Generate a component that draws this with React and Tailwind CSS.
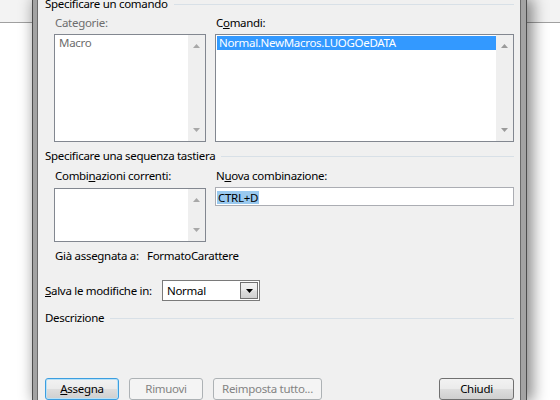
const font = "font-['Noto_Sans',sans-serif] text-[11.5px] leading-4 tracking-[-0.3px] whitespace-nowrap"

function Arrow({ up, color }) {
  return (
    <svg width="7" height="4" viewBox="0 0 7 4" className="block">
      <polygon points={up ? "3.5,0 7,4 0,4" : "0,0 7,0 3.5,4"} fill={color} />
    </svg>
  )
}

function ListBox({ className, arrow, children }) {
  return (
    <div className={`flex border border-[#828790] bg-white ${className}`}>
      <div className="flex-1 pl-px pt-px">{children}</div>
      <div className="flex w-[17px] flex-col items-center justify-between bg-[#efefef] pb-[9px] pt-[9px]">
        <Arrow up color={arrow} />
        <Arrow color={arrow} />
      </div>
    </div>
  )
}

function GroupHeader({ className, children }) {
  return (
    <div className={`flex h-4 items-center ${className}`}>
      <span>{children}</span>
      <div className="ml-[6px] h-px flex-1 bg-[#d8e0e7]" />
    </div>
  )
}

const btn = "flex h-[22px] items-center justify-center rounded-[3px] border"
const btnFace = "bg-[linear-gradient(to_bottom,#f2f2f2_0%,#ebebeb_48%,#dddddd_52%,#cfcfcf_100%)]"

export default function App() {
  return (
    <div
      className={`h-[400px] w-[560px] overflow-hidden bg-[linear-gradient(to_bottom,#f3f3f3_0px,#f3f3f3_22px,#a0a0a0_22px,#a0a0a0_23px,#ffffff_23px)] ${font}`}
    >
      <div className="ml-[32px] flex h-full w-[495px] border-x border-[#4d4d4d] bg-[#a3a3a3] pl-[4px] pr-[5px] shadow-[4px_0_14px_2px_rgba(0,0,0,0.45)]">
        <div className="flex h-full flex-1 flex-col border-x border-[#6b6b6b] bg-[#f0f0f0] pl-[7px] pr-[6px] text-black">
          <GroupHeader className="-mt-[4px]">Specificare un comando</GroupHeader>

          <div className="mt-[3px] flex gap-[9px] pl-[9px]">
            <div className="w-[152px]">
              <div className="pl-px text-[#6d6d6d]">Categorie:</div>
              <ListBox className="mt-[3px] h-[108px]" arrow="#a8a8a8">
                <div className="h-[14px] pl-[3px] leading-[14px] text-[#6d6d6d]">Macro</div>
              </ListBox>
            </div>
            <div className="flex-1">
              <div className="pl-px">
                C<u>o</u>mandi:
              </div>
              <ListBox className="mt-[3px] h-[108px]" arrow="#9a9a9a">
                <div className="h-[14px] bg-[#3399ff] pl-[2px] leading-[14px] text-white">
                  Normal.NewMacros.LUOGOeDATA
                </div>
              </ListBox>
            </div>
          </div>

          <GroupHeader className="mt-[6px]">Specificare una sequenza tastiera</GroupHeader>

          <div className="mt-[4px] flex gap-[9px] pl-[9px]">
            <div className="w-[152px]">
              <div className="pl-px">
                Combi<u>n</u>azioni correnti:
              </div>
              <ListBox className="mt-[4px] h-[54px]" arrow="#a8a8a8" />
            </div>
            <div className="flex-1">
              <div className="pl-px">
                N<u>u</u>ova combinazione:
              </div>
              <div className="mt-[3px] h-[19px] border border-[#abadb3] bg-white pl-px pt-[2px]">
                <span className="inline-block h-[13px] bg-[#99c9ef] px-px leading-[13px]">CTRL+D</span>
              </div>
            </div>
          </div>

          <div className="mt-[6px] flex pl-[10px]">
            <span className="w-[92px]">Già assegnata a:</span>
            <span>FormatoCarattere</span>
          </div>

          <div className="mt-[16px] flex h-[21px] items-center">
            <span className="w-[117px]">
              <u>S</u>alva le modifiche in:
            </span>
            <div className="flex h-[21px] w-[98px] items-center border border-[#7a7a7a] bg-white">
              <span className="pl-[4px]">Normal</span>
              <div
                className={`ml-auto mr-px flex h-[17px] w-[18px] items-center justify-center border border-[#707070] ${btnFace}`}
              >
                <Arrow color="#000000" />
              </div>
            </div>
          </div>

          <GroupHeader className="mt-[9px]">Descrizione</GroupHeader>

          <div className="mt-[52px] flex">
            <div
              className={`${btn} w-[74px] border-[#3c9ee0] ${btnFace} shadow-[inset_0_0_0_1px_#b7e1f7]`}
            >
              <span>
                <u>A</u>ssegna
              </span>
            </div>
            <div className={`${btn} ml-[10px] w-[74px] border-[#adb2b5] bg-[#f4f4f4] text-[#838383]`}>
              Rimuovi
            </div>
            <div className={`${btn} ml-[10px] w-[109px] border-[#adb2b5] bg-[#f4f4f4] text-[#838383]`}>
              Reimposta tutto...
            </div>
            <div className={`${btn} ml-auto w-[75px] border-[#707070] ${btnFace}`}>Chiudi</div>
          </div>
        </div>
      </div>
    </div>
  )
}
